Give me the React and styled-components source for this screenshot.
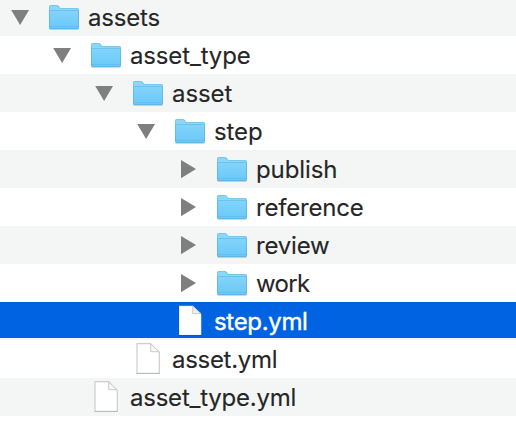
import React from "react";
import styled, { createGlobalStyle } from "styled-components";

const GlobalStyle = createGlobalStyle`
  body { margin: 0; background: #fff; overflow: hidden; }
`;

const List = styled.div`
  width: 516px;
  height: 422px;
  overflow: hidden;
  background: #fff;
  font-family: Inter, "Liberation Sans", sans-serif;
  font-size: 24px;
`;

const Row = styled.div`
  box-sizing: border-box;
  display: flex;
  height: 38px;
  padding-left: ${({ $depth }) => $depth * 42}px;
  background: ${({ $striped }) => ($striped ? "#f4f5f5" : "#fff")};
  color: #262626;
  &:first-child { margin-top: -2px; }
  ${({ $selected }) => $selected && `
    background: #0063e1;
    color: #fff;
    border-bottom: 2px solid #f4f5f5;
  `}
`;

const Toggle = styled.div`
  flex: none;
  width: 44px;
  height: 36px;
  svg { display: block; }
`;

const IconSlot = styled.div`
  flex: none;
  width: 44px;
  height: 36px;
  svg { display: block; overflow: visible; }
`;

const Label = styled.span`
  line-height: 40px;
  height: 36px;
  white-space: nowrap;
  letter-spacing: ${({ $spacing }) => $spacing}px;
  -webkit-text-stroke: ${({ $strong }) => ($strong ? 0.4 : 0.12)}px currentColor;
`;

const Arrow = ({ open }) => (
  <svg width="44" height="38" fill="#7f7f7f">
    <path d={open ? "M11.2 12H29L20.1 27Z" : "M13 10V28.2L28 19.1Z"} />
  </svg>
);

const Folder = () => (
  <svg width="44" height="38">
    <defs>
      <linearGradient id="folderFront" x1="0" y1="0" x2="0" y2="1">
        <stop offset="0" stopColor="#83d4fb" />
        <stop offset="1" stopColor="#69c8f8" />
      </linearGradient>
    </defs>
    <path d="M5.5 31.5H34.5" stroke="#000" strokeOpacity=".16" />
    <path d="M5 30V8.5Q5 7 6.5 7H13Q14 7 14.8 8L16 9.5Q16.5 10 17.5 10H33.5Q35 10 35 11.5V30Z" fill="#78c8ed" />
    <path d="M6 12V8.7Q6 8 6.8 8H12.8Q13.5 8 14.1 8.8L15.4 10.4Q15.9 11 17 11H34V12Z" fill="#8cd6f8" />
    <path d="M5 12.5H35V29.5Q35 31 33.5 31H6.5Q5 31 5 29.5Z" fill="url(#folderFront)" />
    <path d="M5.5 12V29.5Q5.5 30.5 6.5 30.5H33.5Q34.5 30.5 34.5 29.5V12" fill="none" stroke="#56acd8" strokeOpacity=".6" />
    <path d="M5 12.5H35" stroke="#6cc2ed" />
    <path d="M6 28.5H34" stroke="#5bb9e8" strokeOpacity=".6" />
  </svg>
);

const File = ({ selected }) => (
  <svg width="44" height="38">
    <path
      d="M9 3.7H22.5L31.3 12.5V33.3H9Z"
      fill="#fff"
      stroke={selected ? "#144da0" : "#cdcdcd"}
      strokeOpacity={selected ? ".35" : "1"}
      strokeWidth={selected ? ".5" : "1.2"}
    />
    <path d="M8.5 33.5H31.5" stroke={selected ? "#17488e" : "#b7b7b7"} strokeOpacity=".8" />
    <path d="M22.7 4V11.7H31Z" fill={selected ? "#ededed" : "#f9f9f9"} stroke="#cacaca" strokeWidth="1" />
  </svg>
);

const items = [
  { name: "assets", depth: 0, open: true, spacing: -0.17 },
  { name: "asset_type", depth: 1, open: true, spacing: -0.15 },
  { name: "asset", depth: 2, open: true, spacing: -0.1 },
  { name: "step", depth: 3, open: true, spacing: -0.1 },
  { name: "publish", depth: 4, spacing: -0.1 },
  { name: "reference", depth: 4, spacing: -0.2 },
  { name: "review", depth: 4, spacing: -0.2 },
  { name: "work", depth: 4, spacing: -0.65 },
  { name: "step.yml", depth: 3, file: true, selected: true, spacing: -0.33 },
  { name: "asset.yml", depth: 2, file: true, spacing: -0.3 },
  { name: "asset_type.yml", depth: 1, file: true, spacing: -0.23 },
];

export default function App() {
  return (
    <>
      <GlobalStyle />
      <List>
        {items.map((item, i) => (
          <Row key={item.name} $depth={item.depth} $striped={i % 2 === 0} $selected={item.selected}>
            <Toggle>{!item.file && <Arrow open={item.open} />}</Toggle>
            <IconSlot>{item.file ? <File selected={item.selected} /> : <Folder />}</IconSlot>
            <Label $spacing={item.spacing} $strong={item.selected}>{item.name}</Label>
          </Row>
        ))}
      </List>
    </>
  );
}
